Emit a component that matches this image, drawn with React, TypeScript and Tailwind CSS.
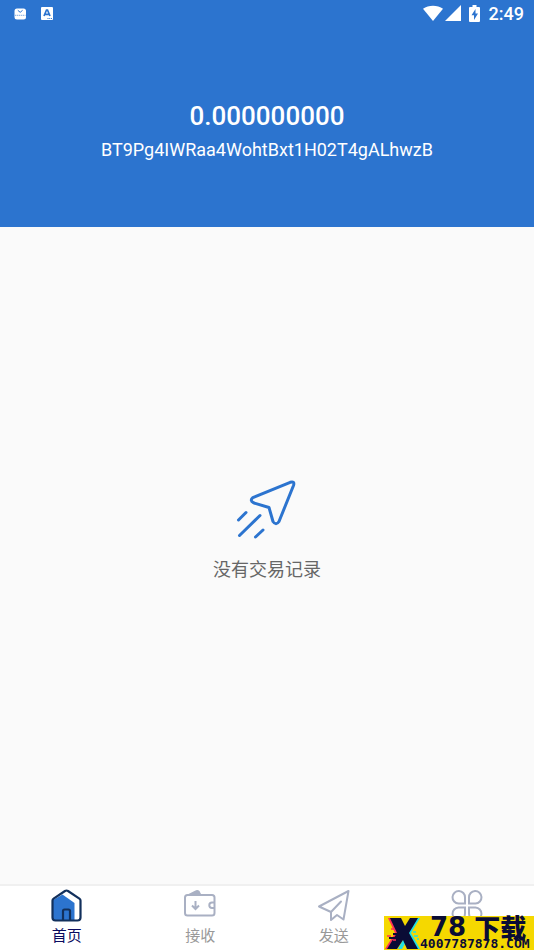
import type { ReactNode } from "react";

const stroke = "#a9b0c3";

function StatusBar() {
  return (
    <div className="flex h-7 items-center justify-between pl-3.5 pr-2.5 text-white">
      <div className="flex items-center gap-3.5">
        <svg width="13" height="13" viewBox="0 0 13 13" aria-hidden="true">
          <rect x="0.5" y="0.5" width="11.5" height="11" rx="2.5" fill="#fff" />
          <path d="M3.800 2.300 6.200 4.300 8.600 2.300" fill="none" stroke="#2c74cf" />
          <path d="M1 7.300h10.500" stroke="#2c74cf" strokeDasharray="1.4 .6" opacity=".6" />
        </svg>
        <svg width="13" height="14" viewBox="0 0 13 14" aria-hidden="true">
          <rect width="12" height="13" rx="1" fill="#fff" />
          <path d="M3 9 5.500 3h1L9 9M4 7.300H8" fill="none" stroke="#2c74cf" strokeWidth="1.700" />
          <path d="M6.500 11.500h4.500" stroke="#2c74cf" strokeDasharray="1 .8" />
        </svg>
      </div>
      <div className="flex items-center">
        <svg width="20" height="18" viewBox="0 0 20 18" aria-hidden="true">
          <path d="M0 3.700C5.500-.4 14.500-.4 20 3.700L10 16Z" fill="#fff" />
        </svg>
        <svg className="ml-0.5" width="16" height="18" viewBox="0 0 16 18" aria-hidden="true">
          <path d="M0 16 16 0V16Z" fill="#fff" />
        </svg>
        <svg className="ml-2" width="12" height="18" viewBox="0 0 12 18" aria-hidden="true">
          <path d="M3.500 0h4v2H10q1 0 1 1v13q0 1-1 1H1q-1 0-1-1V3q0-1 1-1h2.500Z" fill="#fff" />
          <path d="M6.500 4 2.500 10.300H5V15L9 8.600H6.500Z" fill="#2c74cf" />
        </svg>
        <span className="ml-2 text-lg font-medium leading-7">2:49</span>
      </div>
    </div>
  );
}

function HomeIcon() {
  return (
    <svg width="32" height="34" viewBox="0 0 32 34" fill="none" aria-hidden="true">
      <path d="M2 11 11.500 5.500 23.500 14V31H4q-2 0-2-2Z" fill="#2c74cf" />
      <path
        d="M1.500 11.500Q1.500 10.300 2.600 9.600L14 2q1.500-1 3 0L28.400 9.600q1.100.7 1.100 1.900V28.500q0 3-3 3H4.500q-3 0-3-3Z"
        stroke="#12305c"
        strokeWidth="2.200"
      />
      <path d="M12 31V22q0-1.500 1.500-1.500h4q1.500 0 1.500 1.500V31" stroke="#12305c" strokeWidth="2.200" />
    </svg>
  );
}

function ReceiveIcon() {
  return (
    <svg width="32" height="34" viewBox="0 0 32 34" fill="none" stroke={stroke} strokeWidth="2" aria-hidden="true">
      <path d="M4.500 5 11 1.700q2.500-1.300 4.500.3L17 5Z" fill={stroke} stroke="none" />
      <rect x="1" y="6" width="29.500" height="20.500" rx="2.500" />
      <path d="M30.500 13.500h-2.500a2.700 2.700 0 0 0 0 5.400h2.500" />
      <path d="M11.500 12V19.500M8 16.500l3.500 3.500L15 16.500" />
    </svg>
  );
}

function SendIcon() {
  return (
    <svg
      width="32"
      height="34"
      viewBox="0 0 32 34"
      fill="none"
      stroke={stroke}
      strokeWidth="2"
      strokeLinejoin="round"
      strokeLinecap="round"
      aria-hidden="true"
    >
      <path d="M1 17.500 30.500 2 25.500 30.500 19 26 13 31V23Z" />
      <path d="M13 23 23 12.500" />
    </svg>
  );
}

function MoreIcon() {
  return (
    <svg width="32" height="34" viewBox="0 0 32 34" fill="none" stroke={stroke} strokeWidth="2" aria-hidden="true">
      <path d="M14 14.500H7.500A6.250 6.250 0 1 1 14 8.500Z" />
      <path d="M18 14.500h6.500A6.250 6.250 0 1 0 18 8.500Z" />
      <path d="M14 18.500H7.500A6.250 6.250 0 1 0 14 24.500Z" />
      <path d="M18 18.500h6.500A6.250 6.250 0 1 1 18 24.500Z" />
    </svg>
  );
}

function EmptyState() {
  return (
    <div className="flex flex-col items-center gap-4 pb-12">
      <svg
        width="64"
        height="60"
        viewBox="0 0 64 60"
        fill="none"
        stroke="#2c74cf"
        strokeWidth="3"
        strokeLinecap="round"
        strokeLinejoin="round"
        aria-hidden="true"
      >
        <path d="M17.800 17.600 55.200 2.300Q60 1 58.500 5.500L44 41.500Q41 46 38 41.500L34 27.500 18.500 22.800Q14.500 20.500 17.800 17.600Z" />
        <path d="M11 32.500 3.500 40M25 35.500 4.500 55.500M28 50 20.500 57" />
      </svg>
      <p className="text-lg leading-7 text-[#666666]">没有交易记录</p>
    </div>
  );
}

function DownloadBadge() {
  return (
    <div className="absolute bottom-0 right-0 flex h-[34px] w-[150px] bg-[#f5d800] text-[#0a0c35]">
      <svg className="shrink-0" width="36" height="34" viewBox="0 0 36 34" aria-hidden="true">
        <path d="M4 2h10l5 9-2 6-5 7-4 9H1L11 17Z" fill="#ff3157" />
        <path d="M27 2h9L27 17l9 16h-9L22 22Z" fill="#20dfe4" />
        <path d="M14 33h4l5-9-2-4Z" fill="#20dfe4" />
        <path d="M6 2h11l4 8 5-8h8L25 17l9 16H23l-4-9-6 9H3L13 17Z" fill="#0a0c35" />
        <path d="M7 13h3M3 20h4M9 24h3" stroke="#ff3157" strokeWidth="1.500" />
        <path d="M29 16h3M30 20h4M33 23h2" stroke="#20dfe4" strokeWidth="1.500" />
        <path d="M9 18h4M5 22h6" stroke="#0a0c35" strokeWidth="2" />
      </svg>
      <div className="flex flex-col">
        <div className="flex h-[22px] items-center gap-2 pl-2.5">
          <span className="font-['DejaVu_Sans'] text-[26px] font-bold leading-[22px]">78</span>
          <span className="font-['Noto_Sans_CJK_SC'] text-[26px] font-black leading-[22px]">下载</span>
        </div>
        <span className="font-['DejaVu_Sans_Mono'] text-[13px] font-bold leading-3">4007787878.COM</span>
      </div>
    </div>
  );
}

type Tab = { name: string; label?: string; icon: ReactNode; active?: boolean };

const tabs: Tab[] = [
  { name: "home", label: "首页", icon: <HomeIcon />, active: true },
  { name: "receive", label: "接收", icon: <ReceiveIcon /> },
  { name: "send", label: "发送", icon: <SendIcon /> },
  { name: "more", icon: <MoreIcon /> },
];

export default function App() {
  return (
    <div className="relative flex min-h-screen flex-col bg-[#fafafa] font-[Roboto,'Noto_Sans_CJK_SC',sans-serif]">
      <header className="bg-[#2c74cf] pb-[61px] text-white">
        <StatusBar />
        <div className="flex flex-col items-center gap-0.5 pt-[72px]">
          <h1 className="text-[26px] font-medium leading-8">0.000000000</h1>
          <p className="text-lg leading-8">BT9Pg4IWRaa4WohtBxt1H02T4gALhwzB</p>
        </div>
      </header>

      <main className="flex grow items-center justify-center">
        <EmptyState />
      </main>

      <nav className="grid grid-cols-4 border-t-2 border-[#f0f0f0] bg-white">
        {tabs.map((tab) => (
          <button
            key={tab.name}
            type="button"
            aria-label={tab.label ?? "更多"}
            className={`flex flex-col items-center pb-px pt-[3px] text-[15px] leading-[26px] ${
              tab.active ? "text-[#0b0b60]" : "text-[#999999]"
            }`}
          >
            {tab.icon}
            {tab.label}
          </button>
        ))}
      </nav>

      <DownloadBadge />
    </div>
  );
}
